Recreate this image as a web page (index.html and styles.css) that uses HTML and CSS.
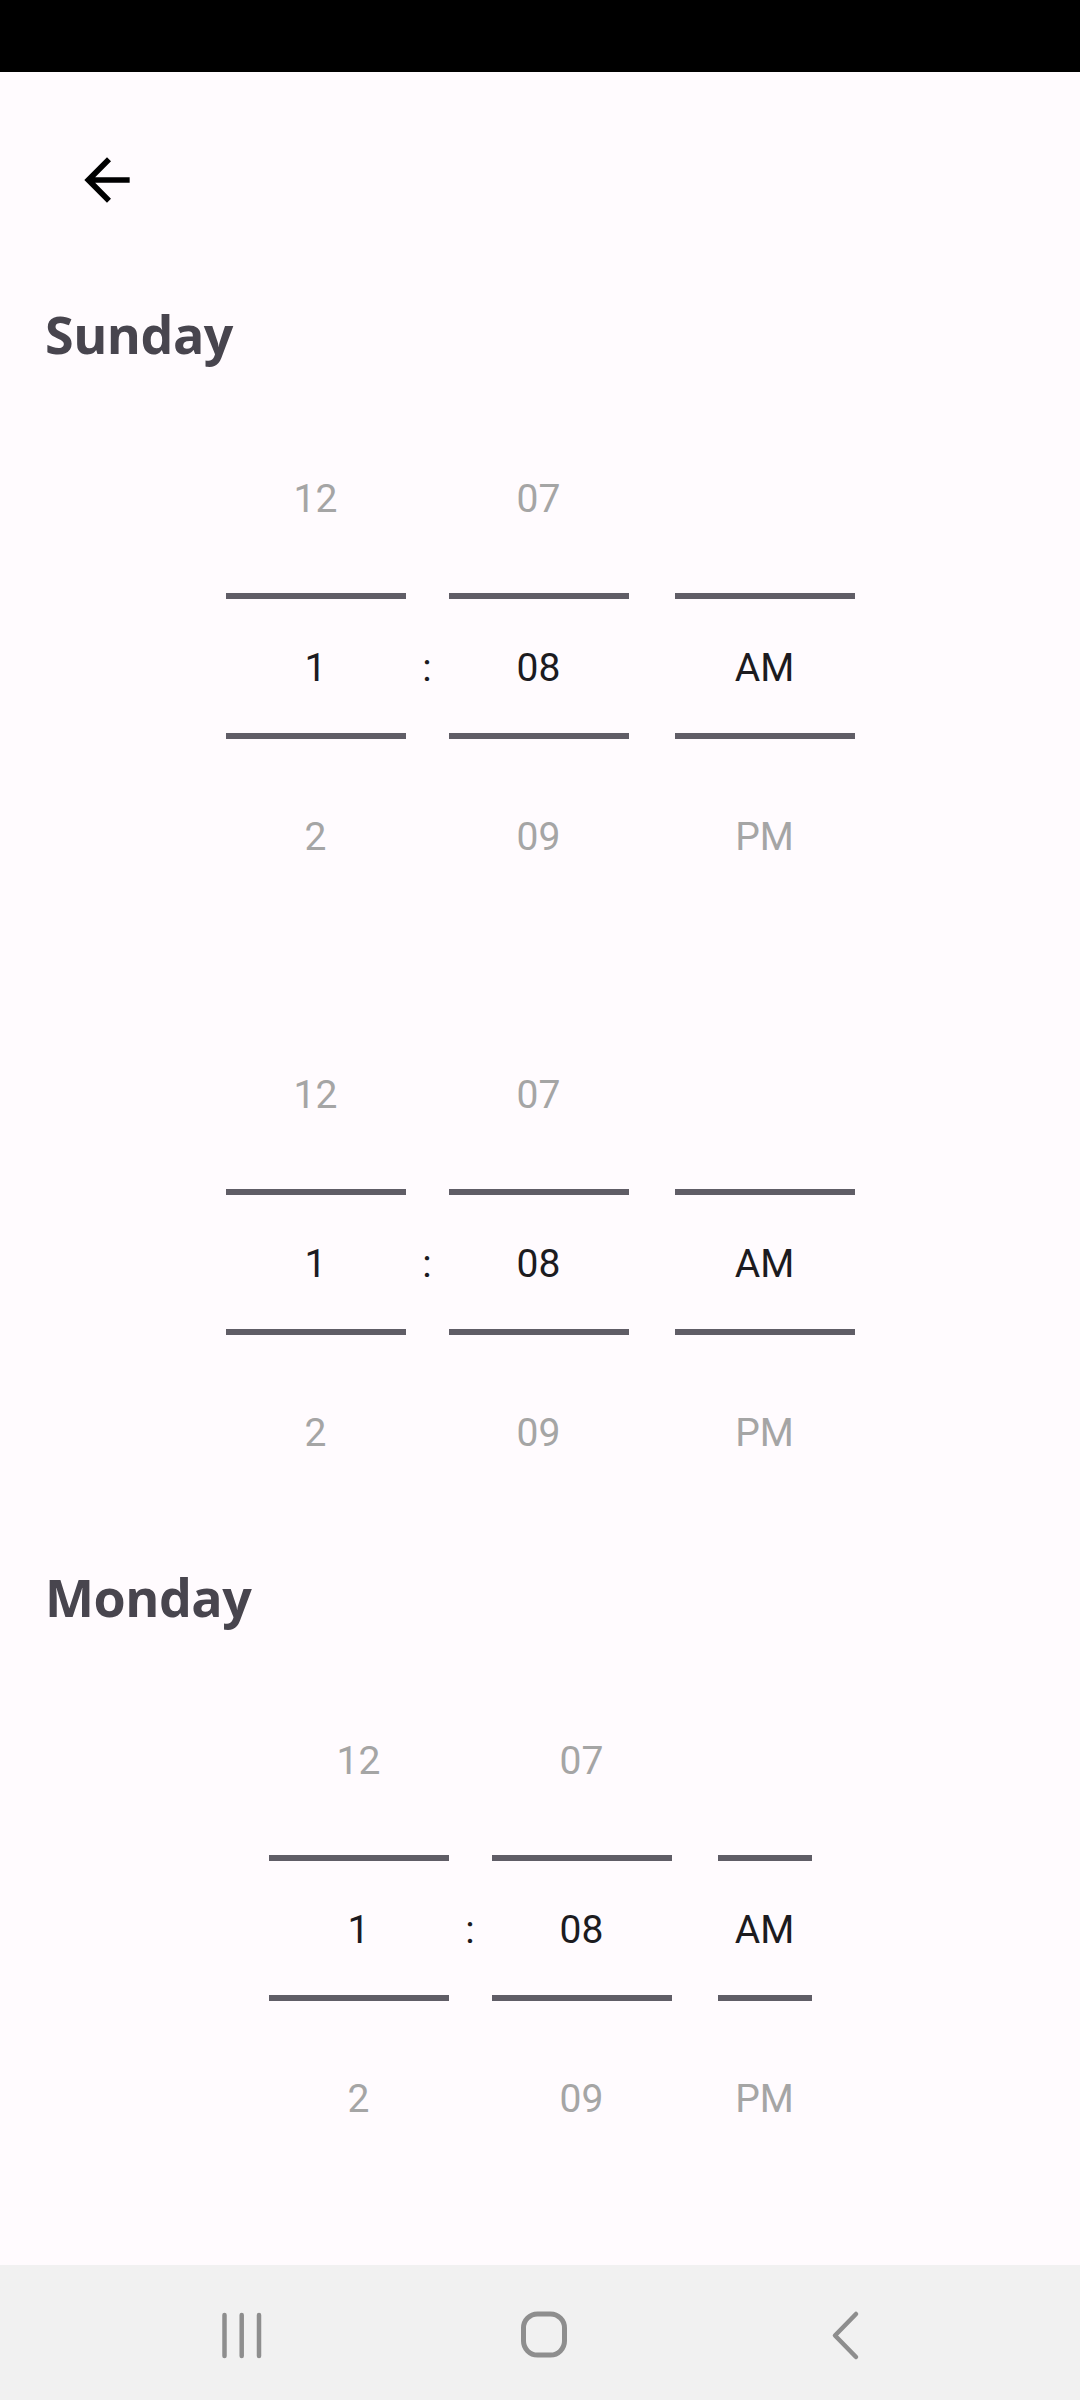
FILE: index.html
```html
<!DOCTYPE html>
<html lang="en">
<head>
<meta charset="utf-8">
<title>Schedule</title>
<link rel="stylesheet" href="styles.css">
</head>
<body>
<div class="screen">
  <div class="status"></div>
  <main class="main">
    <div class="appbar">
      <button class="back" aria-label="Back">
        <svg viewBox="0 0 24 24" width="68" height="68"><path d="M20 11H7.83l5.59-5.59L12 4l-8 8 8 8 1.41-1.41L7.83 13H20v-2z" fill="#000"/></svg>
      </button>
    </div>

    <h2 class="day">Sunday</h2>

    <div class="picker first">
      <div class="wheel"><div class="item">12</div><div class="selected">1</div><div class="item">2</div></div>
      <div class="colon">:</div>
      <div class="wheel"><div class="item">07</div><div class="selected">08</div><div class="item">09</div></div>
      <div class="wheel ampm"><div class="item"></div><div class="selected">AM</div><div class="item">PM</div></div>
    </div>

    <div class="picker second">
      <div class="wheel"><div class="item">12</div><div class="selected">1</div><div class="item">2</div></div>
      <div class="colon">:</div>
      <div class="wheel"><div class="item">07</div><div class="selected">08</div><div class="item">09</div></div>
      <div class="wheel ampm"><div class="item"></div><div class="selected">AM</div><div class="item">PM</div></div>
    </div>

    <h2 class="day day-next">Monday</h2>

    <div class="picker first narrow">
      <div class="wheel"><div class="item">12</div><div class="selected">1</div><div class="item">2</div></div>
      <div class="colon">:</div>
      <div class="wheel"><div class="item">07</div><div class="selected">08</div><div class="item">09</div></div>
      <div class="wheel ampm"><div class="item"></div><div class="selected">AM</div><div class="item">PM</div></div>
    </div>
  </main>

  <nav class="navbar">
    <div class="nav-btn">
      <svg viewBox="0 0 60 60" width="60" height="60"><g stroke="#8e8e8e" stroke-width="4.5" stroke-linecap="round"><line x1="12.5" y1="10" x2="12.5" y2="51"/><line x1="29.7" y1="10" x2="29.7" y2="51"/><line x1="47" y1="10" x2="47" y2="51"/></g></svg>
    </div>
    <div class="nav-btn">
      <svg viewBox="0 0 60 60" width="60" height="60"><rect x="9.5" y="9" width="41" height="41" rx="14" ry="14" fill="none" stroke="#8e8e8e" stroke-width="5"/></svg>
    </div>
    <div class="nav-btn">
      <svg viewBox="0 0 60 60" width="60" height="60"><polyline points="40,9 19,30.5 40,52" fill="none" stroke="#8e8e8e" stroke-width="4.5" stroke-linecap="round" stroke-linejoin="round"/></svg>
    </div>
  </nav>
</div>
</body>
</html>
```

FILE: styles.css
```css
html, body {
  margin: 0;
  padding: 0;
}

body {
  width: 1080px;
  height: 2400px;
  overflow: hidden;
  background: #fffbfe;
  font-family: Roboto, "Noto Sans", sans-serif;
}

.screen {
  width: 1080px;
  height: 2400px;
  display: flex;
  flex-direction: column;
}

.status {
  height: 72px;
  background: #000;
  flex-shrink: 0;
}

.main {
  flex: 1;
  display: flex;
  flex-direction: column;
  background: #fffbfe;
}

.appbar {
  height: 229px;
  box-sizing: border-box;
  padding: 45px 0 0 44px;
}

.back {
  width: 126px;
  height: 126px;
  border: 0;
  padding: 0;
  background: transparent;
  display: flex;
  align-items: center;
  justify-content: center;
}

.day {
  margin: 0;
  padding-left: 45px;
  font-family: "Open Sans", Lato, sans-serif;
  font-weight: 700;
  font-size: 52px;
  line-height: 65px;
  height: 65px;
  color: #48454e;
  letter-spacing: -0.5px;
}

.day-next {
  margin-top: 48px;
}

.picker {
  display: flex;
  justify-content: center;
  height: 505px;
}

.picker.first {
  margin-top: 49px;
}

.picker.narrow {
  margin-top: 48px;
}

.picker.second {
  margin-top: 91px;
}

.wheel {
  width: 180px;
  display: flex;
  flex-direction: column;
}

.ampm {
  margin-left: 46px;
}

.narrow .ampm {
  width: 94px;
}

.item {
  height: 168px;
  display: flex;
  align-items: center;
  justify-content: center;
  font-size: 39px;
  color: #a5a5a5;
}

.selected {
  box-sizing: content-box;
  margin: 10px 0 15px;
  height: 132px;
  padding-top: 3px;
  border-top: 6px solid #605d66;
  border-bottom: 6px solid #605d66;
  display: flex;
  align-items: center;
  justify-content: center;
  font-size: 39px;
  color: #1c1b1f;
}

.selected + .item {
  height: 166px;
}

.colon {
  width: 43px;
  align-self: center;
  text-align: center;
  font-size: 39px;
  color: #1c1b1f;
}

.navbar {
  height: 135px;
  flex-shrink: 0;
  background: #f1f1f1;
  display: flex;
  align-items: center;
  padding: 4px 0 0 212px;
  box-sizing: border-box;
  gap: 242px;
}

.nav-btn {
  width: 60px;
  height: 60px;
  display: flex;
  align-items: center;
  justify-content: center;
}
```
